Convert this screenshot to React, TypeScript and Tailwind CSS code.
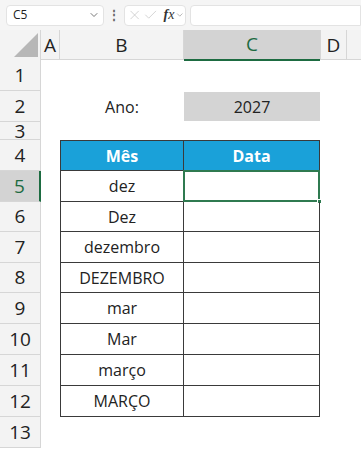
import { ChevronDown, X, Check } from 'lucide-react'

const font = { fontFamily: '"Open Sans", "Noto Sans", Arial, sans-serif' }

const rows: { n: number; h: string; b?: string; c?: string; kind?: 'ano' | 'head' | 'body' }[] = [
  { n: 1, h: 'h-[31px]' },
  { n: 2, h: 'h-[31px]', b: 'Ano:', c: '2027', kind: 'ano' },
  { n: 3, h: 'h-[18px]' },
  { n: 4, h: 'h-[31px]', b: 'Mês', c: 'Data', kind: 'head' },
  { n: 5, h: 'h-[31px]', b: 'dez', kind: 'body' },
  { n: 6, h: 'h-[30px]', b: 'Dez', kind: 'body' },
  { n: 7, h: 'h-[31px]', b: 'dezembro', kind: 'body' },
  { n: 8, h: 'h-[30px]', b: 'DEZEMBRO', kind: 'body' },
  { n: 9, h: 'h-[31px]', b: 'mar', kind: 'body' },
  { n: 10, h: 'h-[31px]', b: 'Mar', kind: 'body' },
  { n: 11, h: 'h-[31px]', b: 'março', kind: 'body' },
  { n: 12, h: 'h-[31px]', b: 'MARÇO', kind: 'body' },
  { n: 13, h: 'h-[31px]' },
]

function FormulaBar() {
  return (
    <div className="h-[30px] bg-[#f5f5f5] flex items-center pl-[6px] gap-[4px]">
      <div className="w-[98px] h-[21px] bg-white border border-[#e3e3e3] rounded-[4px] flex items-center justify-between pl-[6px] pr-[3px]">
        <span className="text-[12px] text-[#222]">C5</span>
        <ChevronDown size={12} strokeWidth={1.6} className="text-[#555]" />
      </div>
      <span className="w-[12px] text-center text-[12px] font-bold text-[#666] leading-none">⋮</span>
      <div className="w-[62px] h-[21px] bg-white border border-[#e3e3e3] rounded-[4px] flex items-center pl-[2px] gap-[1px]">
        <X size={16} strokeWidth={1} className="text-[#bbb]" />
        <Check size={16} strokeWidth={1} className="text-[#bbb]" />
        <span className="ml-[4px] text-[14px] italic text-[#333] leading-none" style={{ fontFamily: '"Liberation Serif", serif' }}>
          <b>f</b>x
        </span>
        <ChevronDown size={10} strokeWidth={1.5} className="text-[#888]" />
      </div>
      <div className="flex-1 h-[21px] bg-white border border-[#e3e3e3] rounded-l-[4px]" />
    </div>
  )
}

function ColumnHeaders() {
  return (
    <div className="grid grid-cols-[41px_19px_124px_136px_27px_1fr] h-[30px] bg-[#f3f3f3] text-[19px] text-[#222] border-b border-[#d6d6d6]">
      <div className="relative border-r border-[#d6d6d6] bg-[#f3f3f3]">
        <svg className="absolute left-[14px] top-[3px]" width="24" height="24" viewBox="0 0 24 24">
          <polygon points="24,0 24,24 0,24" fill="#b7b7b7" />
        </svg>
      </div>
      <div className="flex items-center justify-center border-r border-[#d6d6d6]">A</div>
      <div className="flex items-center justify-center border-r border-[#d6d6d6]">B</div>
      <div className="flex items-center justify-center bg-[#d3d3d3] text-[#1d6b41] border-b-2 border-[#1d6b41] -mb-px">C</div>
      <div className="flex items-center justify-center border-r border-[#d6d6d6] border-l border-l-[#d6d6d6]">D</div>
      <div />
    </div>
  )
}

export default function App() {
  return (
    <div className="w-[361px] h-[450px] overflow-hidden bg-white" style={font}>
      <FormulaBar />
      <ColumnHeaders />
      {rows.map((r) => {
        const selected = r.n === 5
        const short = r.n === 3
        return (
          <div key={r.n} className={`grid grid-cols-[41px_19px_124px_136px_27px_1fr] ${r.h}`}>
            <div
              className={`flex justify-center text-[19px] overflow-hidden ${short ? 'items-end leading-[24px]' : 'items-center leading-none'} ${
                selected
                  ? 'bg-[#d3d3d3] text-[#1d6b41] border-r-2 border-[#1d6b41] border-b border-b-[#d6d6d6]'
                  : 'bg-[#f3f3f3] text-[#222] border-r border-b border-[#d6d6d6]'
              }`}
            >
              <span className={short ? '-mb-[4px]' : ''}>{r.n}</span>
            </div>
            <div />
            {r.kind === 'ano' && (
              <>
                <div className="flex items-center justify-center text-[16px] text-[#222]">{r.b}</div>
                <div className="flex items-center justify-center text-[16px] text-[#222] bg-[#d4d4d4] my-px">{r.c}</div>
              </>
            )}
            {r.kind === 'head' && (
              <>
                <div className="flex items-center justify-center text-[16px] font-bold text-white bg-[#1aa1d9] border border-[#3a3a3a]">
                  {r.b}
                </div>
                <div className="flex items-center justify-center text-[16px] font-bold text-white bg-[#1aa1d9] border-y border-r border-[#3a3a3a]">
                  {r.c}
                </div>
              </>
            )}
            {r.kind === 'body' && (
              <>
                <div className="flex items-center justify-center text-[16px] text-[#222] border-x border-b border-[#3a3a3a]">
                  {r.b}
                </div>
                <div className="relative border-r border-b border-[#3a3a3a]">
                  {selected && (
                    <div className="absolute -left-px -top-px -right-px -bottom-px border-2 border-[#2f7a50]">
                      <div className="absolute -right-[4px] -bottom-[4px] w-[5px] h-[5px] bg-[#2f7a50] border border-white" />
                    </div>
                  )}
                </div>
              </>
            )}
            {!r.kind && (
              <>
                <div />
                <div />
              </>
            )}
            <div />
            <div />
          </div>
        )
      })}
    </div>
  )
}
